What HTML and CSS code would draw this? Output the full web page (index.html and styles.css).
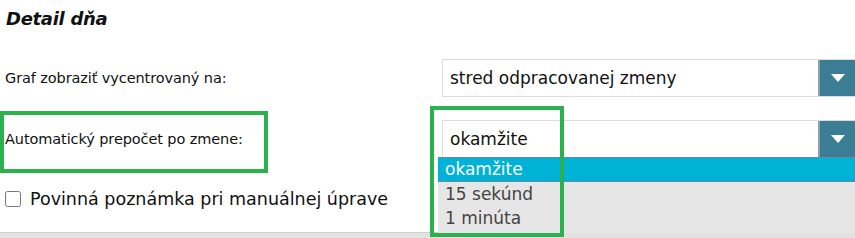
FILE: index.html
```html
<!DOCTYPE html>
<html lang="sk">
<head>
    <meta charset="UTF-8">
    <title>Detail dňa</title>
    <link rel="stylesheet" href="styles.css">
</head>
<body>
<div class="page">
    <h2 class="title">Detail dňa</h2>

    <div class="field first">
        <div class="label">Graf zobraziť vycentrovaný na:</div>
        <div class="select">
            <div class="select-value">stred odpracovanej zmeny</div>
            <div class="select-btn"><span class="arrow"></span></div>
        </div>
    </div>

    <div class="field second">
        <div class="label">Automatický prepočet po zmene:</div>
        <div class="select open">
            <div class="select-value">okamžite</div>
            <div class="select-btn"><span class="arrow"></span></div>
            <ul class="options">
                <li class="active">okamžite</li>
                <li>15 sekúnd</li>
                <li>1 minúta</li>
            </ul>
        </div>
    </div>

    <label class="check">
        <input type="checkbox">
        <span>Povinná poznámka pri manuálnej úprave</span>
    </label>

    <div class="footer"></div>

    <!-- annotation frames -->
    <div class="mark mark-label"></div>
    <div class="mark mark-select"></div>
</div>
</body>
</html>
```

FILE: styles.css
```css
body {
    margin: 0;
    font-family: "DejaVu Sans", Verdana, sans-serif;
    color: #111;
    background: white;
}
.page {
    position: relative;
    width: 855px;
    height: 238px;
    overflow: hidden;
}
.title {
    margin: 0;
    padding: 7px 0 0 6px;
    height: 24px;
    line-height: 24px;
    font-size: 18px;
    font-weight: bold;
    font-style: italic;
    letter-spacing: -0.3px;
}
.field {
    display: flex;
    align-items: center;
    height: 38px;
}
.field.first {
    margin-top: 28px;
}
.field.second {
    margin-top: 23px;
}
.label {
    width: 437px;
    padding-left: 5px;
    font-size: 14.5px;
    letter-spacing: -0.1px;
}
.select {
    position: relative;
    flex: 1;
    display: flex;
    height: 38px;
    box-sizing: border-box;
    border: 1px solid #dcdcdc;
    border-right: none;
}
.select-value {
    flex: 1;
    padding-left: 7px;
    line-height: 36px;
    font-size: 17px;
    background: white;
}
.select-btn {
    width: 35px;
    background: #3a7d94;
    border-left: 2px solid #8e9ea4;
    display: flex;
    align-items: center;
    justify-content: center;
}
.arrow {
    width: 0;
    height: 0;
    border-left: 7px solid transparent;
    border-right: 7px solid transparent;
    border-top: 8px solid white;
}
.options {
    position: absolute;
    top: 36px;
    left: -5px;
    right: 0;
    margin: 0;
    padding: 0 0 3px 0;
    list-style: none;
    background: #e6e6e6;
    z-index: 2;
}
.options li {
    height: 24px;
    line-height: 24px;
    padding-left: 7px;
    font-size: 17px;
    color: #444;
}
.options li.active {
    height: 23px;
    line-height: 23px;
    background: #00b3d6;
    color: white;
    border-top: 1px dotted #c56a6a;
    border-bottom: 1px dotted #c56a6a;
}
.check {
    display: flex;
    align-items: center;
    margin-top: 31px;
    padding-left: 4px;
    font-size: 17.5px;
}
.check input {
    width: 16px;
    height: 16px;
    margin: 0 9px 0 1px;
}
.footer {
    position: absolute;
    left: 0;
    right: 0;
    top: 232px;
    height: 6px;
    background: #e2e2e2;
    border-top: 1px solid #cfcfcf;
}
.mark {
    position: absolute;
    border: 4px solid #2bb24e;
    box-sizing: border-box;
    z-index: 3;
}
.mark-label {
    left: 0;
    top: 111px;
    width: 268px;
    height: 62px;
}
.mark-select {
    left: 430px;
    top: 106px;
    width: 134px;
    height: 131px;
}
```
